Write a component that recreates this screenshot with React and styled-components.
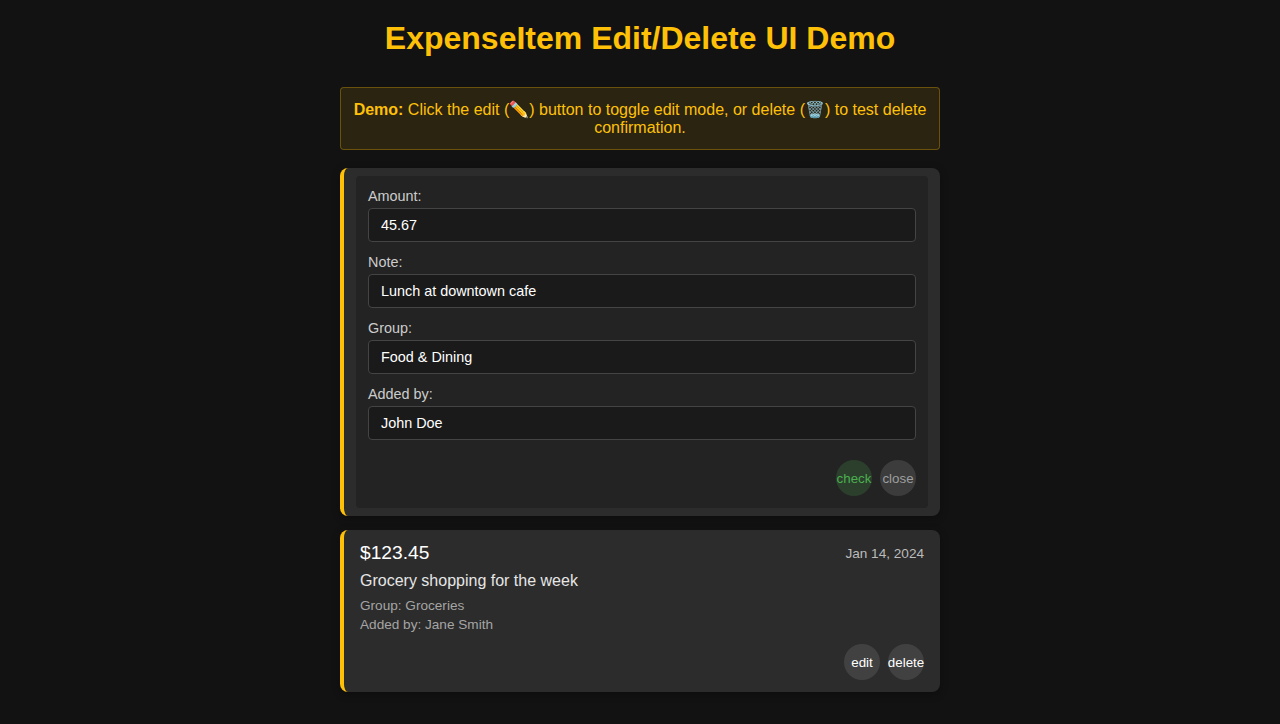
import React from "react";
import styled, { createGlobalStyle } from "styled-components";

const Global = createGlobalStyle`
  * { box-sizing: border-box; }
  html { height: 100%; }
  body {
    margin: 0;
    min-height: 100vh;
    background: #121212;
    color: #fff;
    font-family: "Liberation Sans", Arial, sans-serif;
    overflow: hidden;
  }
`;

const Page = styled.main`
  width: 600px;
  margin: 0 auto;
  padding-top: 20px;
`;

const Title = styled.h1`
  margin: 0 0 30px;
  font-size: 32px;
  line-height: 37px;
  text-align: center;
  color: #ffc107;
`;

const Notice = styled.div`
  padding: 12px;
  height: 63px;
  margin-bottom: 18px;
  border: 1px solid rgba(255, 193, 7, 0.3);
  border-radius: 4px;
  background: rgba(255, 193, 7, 0.1);
  color: #ffc107;
  text-align: center;
  font-size: 16px;
`;

const Card = styled.section`
  margin-bottom: 14px;
  padding: ${(p) => (p.$editing ? "8px 12px" : "12px 16px")};
  border-left: 4px solid #ffc107;
  border-radius: 8px;
  background: #2c2c2c;
  box-shadow: 0 2px 8px rgba(0, 0, 0, 0.3);
`;

const Form = styled.div`
  display: flex;
  flex-direction: column;
  gap: 12px;
  padding: 12px;
  border-radius: 4px;
  background: #232323;
`;

const Field = styled.label`
  display: flex;
  flex-direction: column;
  gap: 4px;
  font-size: 14.4px;
  line-height: 16px;
  color: #ccc;
`;

const Input = styled.input`
  height: 34px;
  padding: 8px 12px;
  border: 1px solid #444;
  border-radius: 4px;
  background: #1a1a1a;
  color: #fff;
  font: 14.4px "Liberation Sans", Arial, sans-serif;
  outline: none;
`;

const Actions = styled.div`
  display: flex;
  justify-content: flex-end;
  gap: 8px;
  margin-top: ${(p) => (p.$spaced ? "12px" : "8px")};
`;

const tones = {
  save: ["rgba(76, 175, 80, 0.2)", "#4caf50"],
  cancel: ["rgba(158, 158, 158, 0.2)", "#9e9e9e"],
  plain: ["rgba(255, 255, 255, 0.1)", "#fff"],
};

const RoundButton = styled.button`
  display: flex;
  align-items: center;
  justify-content: center;
  width: 36px;
  height: 36px;
  padding: 0;
  border: 0;
  border-radius: 50%;
  background: ${(p) => tones[p.$tone][0]};
  color: ${(p) => tones[p.$tone][1]};
  font: 13.3333px "Liberation Sans", Arial, sans-serif;
  white-space: nowrap;
`;

const Header = styled.div`
  display: flex;
  justify-content: space-between;
  align-items: center;
  height: 22px;
  margin-bottom: 8px;
`;

const Amount = styled.span`
  font-size: 19.2px;
`;

const When = styled.span`
  font-size: 13.6px;
  color: #bbb;
`;

const Note = styled.div`
  font-size: 16px;
  line-height: 18px;
  margin-bottom: 8px;
  color: #e6e6e6;
`;

const Meta = styled.div`
  font-size: 13.6px;
  line-height: 15px;
  margin-bottom: 4px;
  color: #a5a5a5;
`;

const fields = [
  ["Amount:", "45.67"],
  ["Note:", "Lunch at downtown cafe"],
  ["Group:", "Food & Dining"],
  ["Added by:", "John Doe"],
];

export default function App() {
  return (
    <Page>
      <Global />
      <Title>ExpenseItem Edit/Delete UI Demo</Title>
      <Notice>
        <strong>Demo:</strong> Click the edit (✏️) button to toggle edit mode, or delete (🗑️) to test delete confirmation.
      </Notice>
      <Card $editing>
        <Form>
          {fields.map(([label, value]) => (
            <Field key={label}>
              {label}
              <Input defaultValue={value} />
            </Field>
          ))}
          <Actions>
            <RoundButton $tone="save">check</RoundButton>
            <RoundButton $tone="cancel">close</RoundButton>
          </Actions>
        </Form>
      </Card>
      <Card>
        <Header>
          <Amount>$123.45</Amount>
          <When>Jan 14, 2024</When>
        </Header>
        <Note>Grocery shopping for the week</Note>
        <Meta>Group: Groceries</Meta>
        <Meta>Added by: Jane Smith</Meta>
        <Actions $spaced>
          <RoundButton $tone="plain">edit</RoundButton>
          <RoundButton $tone="plain">delete</RoundButton>
        </Actions>
      </Card>
    </Page>
  );
}
